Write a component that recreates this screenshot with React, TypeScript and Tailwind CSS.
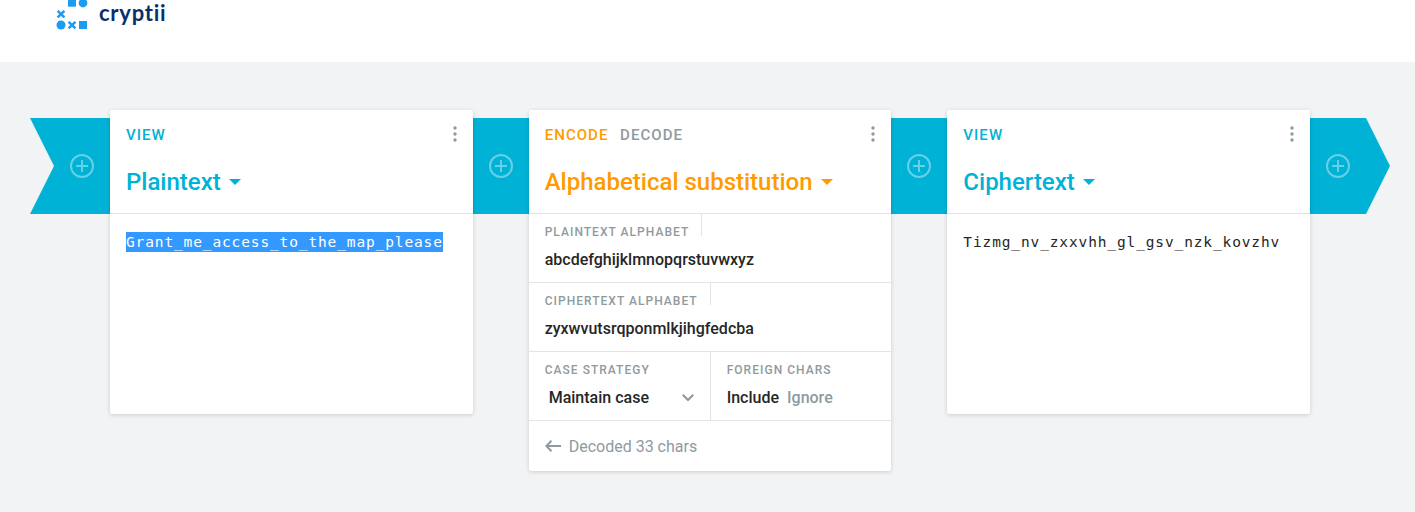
import type { ReactNode } from "react";

function Logo() {
  return (
    <div className="flex h-[30px] items-start pl-14">
      <svg width="32" height="30" viewBox="0 0 32 30" fill="#1a9cf0">
        <rect x="12" y="-2" width="8" height="8.7" />
        <circle cx="27" cy="3" r="4.4" />
        <path d="M1.6 10.8l6.8 6.6M8.4 10.8l-6.8 6.6M12.6 21.8l6.8 6.6M19.4 21.8l-6.8 6.6" stroke="#1a9cf0" strokeWidth="2.5" />
        <circle cx="5" cy="25" r="4.5" />
        <rect x="23" y="21" width="8" height="8" />
      </svg>
      <span className="ml-[11px] font-['Lato',sans-serif] text-[22px] leading-[26px] font-bold tracking-[0.75px] text-[#0b2f6b]">
        cryptii
      </span>
    </div>
  );
}

function AddBrick({ className = "w-14" }: { className?: string }) {
  return (
    <div className={`mt-2 flex h-24 shrink-0 items-center bg-[#00b2d5] ${className}`}>
      <button className="flex w-14 justify-center" aria-label="Add">
        <svg width="24" height="24" viewBox="0 0 24 24" fill="none" stroke="#fff" strokeOpacity="0.4" strokeWidth="2">
          <circle cx="12" cy="12" r="11" />
          <path d="M12 6v5M12 13v5M6 12h12" />
        </svg>
      </button>
    </div>
  );
}

interface BrickProps {
  modes: string[];
  title: string;
  accent: string;
  children: ReactNode;
  className?: string;
}

function Brick({ modes, title, accent, children, className = "" }: BrickProps) {
  return (
    <section className={`z-10 min-w-0 flex-1 rounded-[2px] bg-white shadow-[0_1px_4px_rgba(0,0,0,0.16)] ${className}`}>
      <header className={`h-[104px] border-b border-[#e0e5e8] pl-4 ${accent}`}>
        <div className="flex h-12 items-center justify-between pr-4">
          <div className="flex gap-[11.6px] pt-[2px] text-[15px] leading-5 font-medium tracking-[1.05px]">
            {modes.map((mode, i) => (
              <span key={mode} className={i > 0 ? "text-[#8f9a9f]" : ""}>{mode}</span>
            ))}
          </div>
          <svg width="4" height="16" viewBox="0 0 4 16" fill="#8f9a9f">
            <circle cx="2" cy="2" r="1.7" />
            <circle cx="2" cy="8" r="1.7" />
            <circle cx="2" cy="14" r="1.7" />
          </svg>
        </div>
        <div className="flex h-12 items-center gap-2">
          <h2 className="text-[24px] leading-8 font-medium">{title}</h2>
          <svg width="12" height="6" viewBox="0 0 12 6" fill="currentColor">
            <path d="M0 0h12L6 6z" />
          </svg>
        </div>
      </header>
      {children}
    </section>
  );
}

function Label({ children }: { children: ReactNode }) {
  return (
    <span className="block text-[12px] leading-4 font-medium tracking-[1.03px] whitespace-nowrap text-[#8f9a9f]">
      {children}
    </span>
  );
}

function TextField({ label, value, labelWidth }: { label: string; value: string; labelWidth: string }) {
  return (
    <div className="h-[69px] border-b border-[#e0e5e8] pl-4">
      <div className={`h-[22px] border-r border-[#e0e5e8] pt-[10px] ${labelWidth}`}>
        <Label>{label}</Label>
      </div>
      <div className="pt-3 text-[16px] leading-6 font-medium text-[#262626]">{value}</div>
    </div>
  );
}

const mono = "h-5 font-['DejaVu_Sans_Mono',monospace] text-[14.5px] leading-5 tracking-[0.87px] whitespace-nowrap";

export default function App() {
  return (
    <div className="h-[512px] overflow-hidden bg-[#f1f3f5] font-['Roboto',sans-serif]">
      <div className="h-[62px] bg-white">
        <Logo />
      </div>
      <main className="flex items-start pt-12 pr-[25px] pl-[30px]">
        <AddBrick className="w-20 pl-6 [clip-path:polygon(0_0,100%_0,100%_100%,0_100%,24px_50%)]" />
        <Brick modes={["VIEW"]} title="Plaintext" accent="text-[#00b2d5]" className="h-[304px]">
          <div className="px-4 pt-[18px]">
            <span className={`block w-[317px] bg-[#3399ff] text-white ${mono}`}>Grant_me_access_to_the_map_please</span>
          </div>
        </Brick>
        <AddBrick />
        <Brick modes={["ENCODE", "DECODE"]} title="Alphabetical substitution" accent="text-[#ff9b00]" className="h-[361px]">
          <TextField label="PLAINTEXT ALPHABET" value="abcdefghijklmnopqrstuvwxyz" labelWidth="w-[157px]" />
          <TextField label="CIPHERTEXT ALPHABET" value="zyxwvutsrqponmlkjihgfedcba" labelWidth="w-[166px]" />
          <div className="grid h-[69px] grid-cols-[182px_1fr] border-b border-[#e0e5e8]">
            <div className="border-r border-[#e0e5e8] pt-[10px] pr-4 pl-4">
              <Label>CASE STRATEGY</Label>
              <div className="flex items-center justify-between pt-2 pl-1 text-[16px] leading-6 font-medium text-[#262626]">
                Maintain case
                <svg width="12" height="8" viewBox="0 0 12 8" fill="none" stroke="#8f9a9f" strokeWidth="2.2">
                  <path d="M.8 .8L6 6l5.2-5.2" />
                </svg>
              </div>
            </div>
            <div className="pt-[10px] pl-4">
              <Label>FOREIGN CHARS</Label>
              <div className="flex gap-2 pt-2 text-[16px] leading-6 font-medium text-[#262626]">
                <span>Include</span>
                <span className="text-[#8f9a9f]">Ignore</span>
              </div>
            </div>
          </div>
          <footer className="flex h-[50px] items-center gap-2 pt-px pl-4 text-[16px] text-[#8f9a9f]">
            <svg className="mb-px" width="16" height="12" viewBox="0 0 16 12" fill="none" stroke="currentColor" strokeWidth="2">
              <path d="M16 6H1.5M6.5 .8L1.3 6l5.2 5.2" />
            </svg>
            Decoded 33 chars
          </footer>
        </Brick>
        <AddBrick />
        <Brick modes={["VIEW"]} title="Ciphertext" accent="text-[#00b2d5]" className="h-[304px]">
          <div className="px-4 pt-[18px]">
            <span className={`block text-[#262626] ${mono}`}>Tizmg_nv_zxxvhh_gl_gsv_nzk_kovzhv</span>
          </div>
        </Brick>
        <AddBrick className="w-20 [clip-path:polygon(0_0,56px_0,100%_50%,56px_100%,0_100%)]" />
      </main>
    </div>
  );
}
